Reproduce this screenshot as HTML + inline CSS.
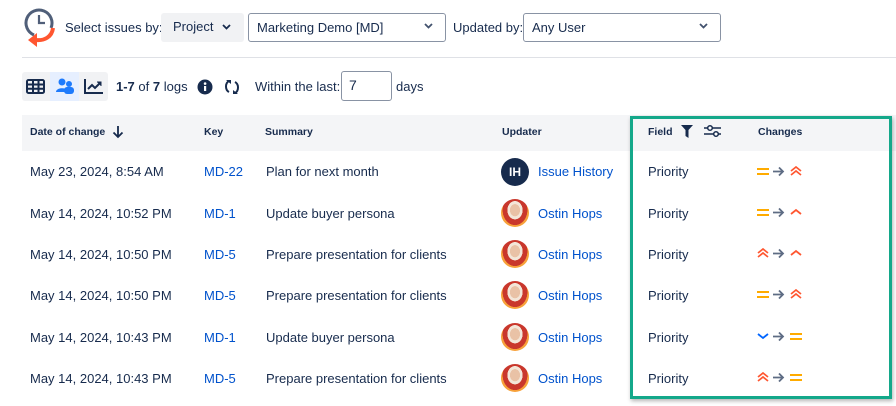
<!DOCTYPE html>
<html><head><meta charset="utf-8"><style>
*{box-sizing:border-box;margin:0;padding:0}
body{width:896px;height:406px;background:#fff;font-family:"Liberation Sans",sans-serif;color:#172b4d;position:relative;overflow:hidden;font-size:13px}
.a{position:absolute}
.sel{position:absolute;border:1px solid #8993a4;border-radius:3px;background:#fff;height:29px;font-size:13px;padding:6px 8px;color:#172b4d}
.chev{position:absolute;right:12px;top:9px}
.th{position:absolute;top:126px;font-size:10.5px;font-weight:bold;color:#172b4d}
.td{position:absolute;font-size:13px;color:#172b4d;margin-top:-1px}
.lk{color:#0052cc}
.av{position:absolute;width:28px;height:28px;border-radius:50%}
.ph{background:radial-gradient(ellipse at 50% 40%,#e9c2a6 0 25%,#f3e6d8 26% 38%,#c9372c 39% 62%,#f7a13a 63%)}
</style></head><body>
<svg class="a" style="left:22px;top:6px" width="36" height="42" viewBox="0 0 36 42">
<path d="M12 29 A13 13 0 1 1 29 22" fill="none" stroke="#505f79" stroke-width="3"/>
<path d="M17 9 V17 H23" fill="none" stroke="#505f79" stroke-width="2.2"/>
<path d="M31 22 C30 31 22 35 14 34" fill="none" stroke="#ff5630" stroke-width="4"/>
<path d="M6 34 L15 27 L15 41 Z" fill="#ff5630"/>
</svg>
<div class="a" style="left:65px;top:20px;font-size:13px">Select issues by:</div>
<div class="a" style="left:161px;top:13px;width:83px;height:29px;background:#f1f2f4;border-radius:3px;padding:6px 12px;font-size:13px">Project</div>
<svg class="a" style="left:222px;top:24px" width="9" height="6"><path d="M1 1l3.5 3.5L8 1" stroke="#172b4d" stroke-width="1.8" fill="none"/></svg>
<div class="sel" style="left:248px;top:13px;width:198px">Marketing Demo [MD]<svg class="chev" width="9" height="6"><path d="M1 1l3.5 3.5L8 1" stroke="#42526e" stroke-width="1.8" fill="none"/></svg></div>
<div class="a" style="left:453px;top:20px">Updated by:</div>
<div class="sel" style="left:523px;top:13px;width:198px">Any User<svg class="chev" width="9" height="6"><path d="M1 1l3.5 3.5L8 1" stroke="#42526e" stroke-width="1.8" fill="none"/></svg></div>
<div class="a" style="left:22px;top:57px;width:874px;height:1px;background:#dfe1e6"></div>

<div class="a" style="left:22px;top:72px;width:86px;height:29px;background:#f1f2f4;border-radius:3px"></div>
<div class="a" style="left:50px;top:72px;width:29px;height:29px;background:#e6efff"></div>
<svg class="a" style="left:26px;top:79px" width="20" height="15"><rect x="1" y="1" width="17" height="13" rx="1.5" fill="none" stroke="#172b4d" stroke-width="2"/><path d="M1 5.5H18M1 9.8H18M7 1V14M12.5 1V14" stroke="#172b4d" stroke-width="2"/></svg>
<svg class="a" style="left:55px;top:77px" width="20" height="18"><circle cx="7" cy="5" r="3.5" fill="#1d7afc"/><circle cx="14" cy="7" r="3" fill="#1d7afc"/><path d="M1 15c0-5 12-5 12 0z" fill="#1d7afc"/><rect x="9" y="10" width="10" height="7" rx="3" fill="#1d7afc"/></svg>
<svg class="a" style="left:84px;top:78px" width="20" height="16"><path d="M1 1V15H19" stroke="#172b4d" stroke-width="2" fill="none"/><path d="M4 11l4-4 3 3 5-5" stroke="#172b4d" stroke-width="2" fill="none"/><path d="M13 4h4v4" fill="#172b4d" stroke="#172b4d" stroke-width="1"/></svg>
<div class="a" style="left:116px;top:79px"><b>1-7</b> of <b>7</b> logs</div>
<svg class="a" style="left:197px;top:79px" width="16" height="16"><circle cx="8" cy="8" r="7.5" fill="#172b4d"/><rect x="7" y="7" width="2.2" height="5" fill="#fff"/><circle cx="8.1" cy="4.6" r="1.3" fill="#fff"/></svg>
<svg class="a" style="left:223px;top:78px" width="18" height="18"><path d="M6 3C2 5 2 12 6 14" stroke="#172b4d" stroke-width="2" fill="none"/><path d="M12 15C16 13 16 6 12 4" stroke="#172b4d" stroke-width="2" fill="none"/><path d="M3 2h5v4z" fill="#172b4d"/><path d="M15 16h-5v-4z" fill="#172b4d"/></svg>
<div class="a" style="left:255px;top:79px">Within the last:</div>
<div class="a" style="left:341px;top:71px;width:51px;height:30px;border:1px solid #8993a4;border-radius:3px;padding:5px 7px;font-size:14px">7</div>
<div class="a" style="left:396px;top:79px">days</div>

<div class="a" style="left:22px;top:115px;width:874px;height:36px;background:#f4f5f7"></div>
<div class="th" style="left:30px">Date of change</div>
<svg class="a" style="left:112px;top:125px" width="12" height="14"><path d="M6 1V12M1.5 7.5L6 12l4.5-4.5" stroke="#172b4d" stroke-width="1.8" fill="none"/></svg>
<div class="th" style="left:204px">Key</div>
<div class="th" style="left:265px">Summary</div>
<div class="th" style="left:502px">Updater</div>
<div class="th" style="left:648px">Field</div>
<svg class="a" style="left:681px;top:125px" width="12" height="13"><path d="M0 0H12L7.5 5V13L4.5 11V5Z" fill="#172b4d"/></svg>
<svg class="a" style="left:703px;top:124px" width="19" height="14"><path d="M1 4H18M1 10H18" stroke="#172b4d" stroke-width="1.6"/><circle cx="7" cy="4" r="2.3" fill="#fff" stroke="#172b4d" stroke-width="1.5"/><circle cx="13" cy="10" r="2.3" fill="#fff" stroke="#172b4d" stroke-width="1.5"/></svg>
<div class="th" style="left:758px">Changes</div>

<svg width="0" height="0" style="position:absolute"><defs>
<g id="eq"><path d="M0 2H12M0 7H12" stroke="#ffab00" stroke-width="2"/></g>
<g id="ar"><path d="M0 4.5H10M6 0.5L10 4.5L6 8.5" stroke="#5e6c84" stroke-width="1.8" fill="none"/></g>
<g id="hh"><path d="M1 5L6 1L11 5M1 9L6 5L11 9" stroke="#ff5630" stroke-width="1.7" fill="none"/></g>
<g id="h"><path d="M1 7L6 3L11 7" stroke="#ff5630" stroke-width="1.8" fill="none"/></g>
<g id="lo"><path d="M1 3L6 7L11 3" stroke="#0065ff" stroke-width="1.8" fill="none"/></g>
</defs></svg>

<div class="td" style="left:30px;top:165px">May 23, 2024, 8:54 AM</div>
<div class="td lk" style="left:204px;top:165px">MD-22</div>
<div class="td" style="left:266px;top:165px">Plan for next month</div>
<div class="av" style="left:501px;top:158px;background:#172b4d;color:#fff;font-size:12px;font-weight:bold;text-align:center;line-height:28px">IH</div>
<div class="td lk" style="left:538px;top:165px">Issue History</div>
<div class="td" style="left:648px;top:165px">Priority</div>
<svg class="a" style="left:757px;top:166px" width="50" height="11"><use href="#eq" y="1"/><use href="#ar" x="16" y="1"/><use href="#hh" x="33"/></svg>

<div class="td" style="left:30px;top:207px">May 14, 2024, 10:52 PM</div>
<div class="td lk" style="left:204px;top:207px">MD-1</div>
<div class="td" style="left:266px;top:207px">Update buyer persona</div>
<div class="av ph" style="left:501px;top:199px"></div>
<div class="td lk" style="left:538px;top:207px">Ostin Hops</div>
<div class="td" style="left:648px;top:207px">Priority</div>
<svg class="a" style="left:757px;top:207px" width="50" height="11"><use href="#eq" y="1"/><use href="#ar" x="16" y="1"/><use href="#h" x="33"/></svg>

<div class="td" style="left:30px;top:248px">May 14, 2024, 10:50 PM</div>
<div class="td lk" style="left:204px;top:248px">MD-5</div>
<div class="td" style="left:266px;top:248px">Prepare presentation for clients</div>
<div class="av ph" style="left:501px;top:240px"></div>
<div class="td lk" style="left:538px;top:248px">Ostin Hops</div>
<div class="td" style="left:648px;top:248px">Priority</div>
<svg class="a" style="left:757px;top:248px" width="50" height="11"><use href="#hh"/><use href="#ar" x="16" y="1"/><use href="#h" x="33"/></svg>

<div class="td" style="left:30px;top:289px">May 14, 2024, 10:50 PM</div>
<div class="td lk" style="left:204px;top:289px">MD-5</div>
<div class="td" style="left:266px;top:289px">Prepare presentation for clients</div>
<div class="av ph" style="left:501px;top:281px"></div>
<div class="td lk" style="left:538px;top:289px">Ostin Hops</div>
<div class="td" style="left:648px;top:289px">Priority</div>
<svg class="a" style="left:757px;top:289px" width="50" height="11"><use href="#eq" y="1"/><use href="#ar" x="16" y="1"/><use href="#hh" x="33"/></svg>

<div class="td" style="left:30px;top:331px">May 14, 2024, 10:43 PM</div>
<div class="td lk" style="left:204px;top:331px">MD-1</div>
<div class="td" style="left:266px;top:331px">Update buyer persona</div>
<div class="av ph" style="left:501px;top:323px"></div>
<div class="td lk" style="left:538px;top:331px">Ostin Hops</div>
<div class="td" style="left:648px;top:331px">Priority</div>
<svg class="a" style="left:757px;top:331px" width="50" height="11"><use href="#lo"/><use href="#ar" x="16" y="1"/><use href="#eq" x="33" y="1"/></svg>

<div class="td" style="left:30px;top:372px">May 14, 2024, 10:43 PM</div>
<div class="td lk" style="left:204px;top:372px">MD-5</div>
<div class="td" style="left:266px;top:372px">Prepare presentation for clients</div>
<div class="av ph" style="left:501px;top:364px"></div>
<div class="td lk" style="left:538px;top:372px">Ostin Hops</div>
<div class="td" style="left:648px;top:372px">Priority</div>
<svg class="a" style="left:757px;top:372px" width="50" height="11"><use href="#hh"/><use href="#ar" x="16" y="1"/><use href="#eq" x="33" y="1"/></svg>

<div class="a" style="left:630px;top:116px;width:262px;height:283px;border:3px solid #14a88a;box-shadow:1px 2px 4px rgba(0,0,0,.3)"></div>
</body></html>
